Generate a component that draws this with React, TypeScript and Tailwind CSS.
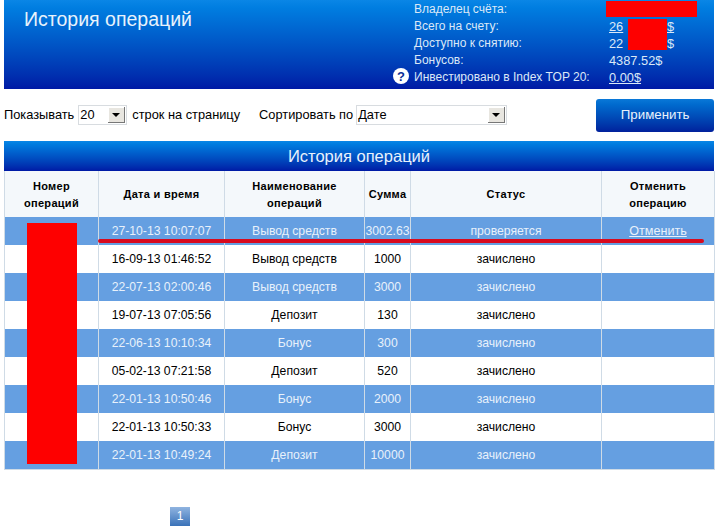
const ROWS = [
  { date: '27-10-13 10:07:07', name: 'Вывод средств', sum: '3002.63', status: 'проверяется', cancel: true },
  { date: '16-09-13 01:46:52', name: 'Вывод средств', sum: '1000', status: 'зачислено' },
  { date: '22-07-13 02:00:46', name: 'Вывод средств', sum: '3000', status: 'зачислено' },
  { date: '19-07-13 07:05:56', name: 'Депозит', sum: '130', status: 'зачислено' },
  { date: '22-06-13 10:10:34', name: 'Бонус', sum: '300', status: 'зачислено' },
  { date: '05-02-13 07:21:58', name: 'Депозит', sum: '520', status: 'зачислено' },
  { date: '22-01-13 10:50:46', name: 'Бонус', sum: '2000', status: 'зачислено' },
  { date: '22-01-13 10:50:33', name: 'Бонус', sum: '3000', status: 'зачислено' },
  { date: '22-01-13 10:49:24', name: 'Депозит', sum: '10000', status: 'зачислено' },
]

function FakeSelect({ value, width }: { value: string; width: string }) {
  return (
    <div className={`flex items-center justify-between h-[20px] border border-[#d8dce0] bg-white pl-[1px] pr-[1px] ${width}`}>
      <span className="text-[12.8px] leading-none text-black">{value}</span>
      <span className="flex items-center justify-center w-[17px] h-[16px] bg-[#e8e6e0] border-r border-b border-[#777] shadow-[inset_1px_1px_0_#fff]">
        <span className="w-0 h-0 border-x-[4px] border-x-transparent border-t-[4px] border-t-black" />
      </span>
    </div>
  )
}

export default function App() {
  return (
    <div className="relative w-[718px] h-[530px] overflow-hidden bg-white font-['Liberation_Sans',Arial,sans-serif]">
      {/* Top banner */}
      <div className="mx-[4px] w-[710px] h-[89px] flex justify-between bg-gradient-to-b from-[#0a86e6] to-[#0019a5] text-white">
        <h1 className="pl-[20px] pt-[6px] text-[19.5px] leading-[26px] font-normal text-[#e8f2fc]">История операций</h1>
        <div className="relative w-[300px] pt-[1px] text-[12px] leading-[17px] text-[#dbe8f7]">
          {[
            ['Владелец счёта:', ''],
            ['Всего на счету:', '26'],
            ['Доступно к снятию:', '22'],
            ['Бонусов:', '4387.52$'],
            ['Инвестировано в Index TOP 20:', '0.00$'],
          ].map(([label, value]) => (
            <div key={label} className="flex">
              <span className="w-[195px]">{label}</span>
              <span className={`text-[12.8px] ${value === '0.00$' ? 'underline' : ''} ${value === '26' ? 'underline w-[64px]' : ''}`}>{value}</span>
            </div>
          ))}
          {/* help icon */}
          <span className="absolute left-[-21px] top-[68px] flex items-center justify-center w-[16px] h-[16px] rounded-full bg-white text-[#0c2f96] text-[13px] leading-none font-bold">?</span>
          <span className="absolute left-[253px] top-[18px] text-[12.8px] underline">$</span>
          <span className="absolute left-[253px] top-[35px] text-[12.8px]">$</span>
        </div>
      </div>

      {/* Filters */}
      <div className="flex items-center h-[34px] mt-[9px] pl-[4px] text-[12.8px] text-black">
        <span>Показывать</span>
        <div className="ml-[4px]"><FakeSelect value="20" width="w-[49px]" /></div>
        <span className="ml-[5px]">строк на страницу</span>
        <span className="ml-[19px]">Сортировать по</span>
        <div className="ml-[3px]"><FakeSelect value="Дате" width="w-[151px]" /></div>
        <button className="ml-[89px] w-[118px] h-[33px] rounded-[3px] bg-gradient-to-b from-[#0a78d8] to-[#02209c] text-[13.3px] text-[#e8f2fc]">Применить</button>
      </div>

      {/* Operations table */}
      <div className="mx-[4px] mt-[9px] w-[710px]">
        <div className="h-[30px] flex items-center justify-center bg-gradient-to-b from-[#0a86e6] to-[#0019a5] text-[16.5px] text-[#e8f2fc]">История операций</div>
        <table className="w-full table-fixed border-collapse text-[12.2px] border-x border-b border-[#cfdbe6]">
          <colgroup>
            <col className="w-[94px]" />
            <col className="w-[126px]" />
            <col className="w-[140px]" />
            <col className="w-[46px]" />
            <col className="w-[191px]" />
            <col className="w-[113px]" />
          </colgroup>
          <thead>
            <tr className="h-[46px] bg-[#f4f8fb] text-black">
              <th className="border-x border-[#cfdbe6] pt-[1px] font-bold text-[11px] leading-[17px] tracking-[0.3px]">Номер<br />операций</th>
              <th className="border-x border-[#cfdbe6] pt-[1px] font-bold text-[11px] leading-[17px] tracking-[0.3px]">Дата и время</th>
              <th className="border-x border-[#cfdbe6] pt-[1px] font-bold text-[11px] leading-[17px] tracking-[0.3px]">Наименование<br />операций</th>
              <th className="border-x border-[#cfdbe6] pt-[1px] font-bold text-[11px] leading-[17px] tracking-[0.3px]">Сумма</th>
              <th className="border-x border-[#cfdbe6] pt-[1px] font-bold text-[11px] leading-[17px] tracking-[0.3px]">Статус</th>
              <th className="border-x border-[#cfdbe6] pt-[1px] font-bold text-[11px] leading-[17px] tracking-[0.3px]">Отменить<br />операцию</th>
            </tr>
          </thead>
          <tbody>
            {ROWS.map((r, i) => (
              <tr key={r.date} className={`h-[28px] text-center ${i % 2 === 0 ? 'bg-[#659fe1] text-[#e8f1fb]' : 'bg-white text-black'}`}>
                <td className="border-x border-[#cfdbe6]"></td>
                <td className="border-x border-[#cfdbe6]">{r.date}</td>
                <td className="border-x border-[#cfdbe6]">{r.name}</td>
                <td className="border-x border-[#cfdbe6]">{r.sum}</td>
                <td className="border-x border-[#cfdbe6]">{r.status}</td>
                <td className="border-x border-[#cfdbe6]">
                  {r.cancel && <a className="underline text-[12.6px]">Отменить</a>}
                </td>
              </tr>
            ))}
          </tbody>
        </table>
      </div>

      {/* Pagination */}
      <div className="mt-[37px] ml-[170px] flex items-center justify-center w-[20px] h-[19px] bg-gradient-to-b from-[#8fb4e0] to-[#3a72b8] text-[12px] text-white">1</div>

      {/* Redactions and marker drawn over the page */}
      <div className="absolute left-[606px] top-[1px] w-[91px] h-[16px] bg-[#fe0000]" />
      <div className="absolute left-[628px] top-[19px] w-[39px] h-[31px] bg-[#fe0000]" />
      <div className="absolute left-[27px] top-[223px] w-[50px] h-[241px] bg-[#fe0000]" />
      <div className="absolute left-[98px] top-[239px] w-[606px] h-[4px] rounded-full bg-[#d80a1e]" />
    </div>
  )
}
